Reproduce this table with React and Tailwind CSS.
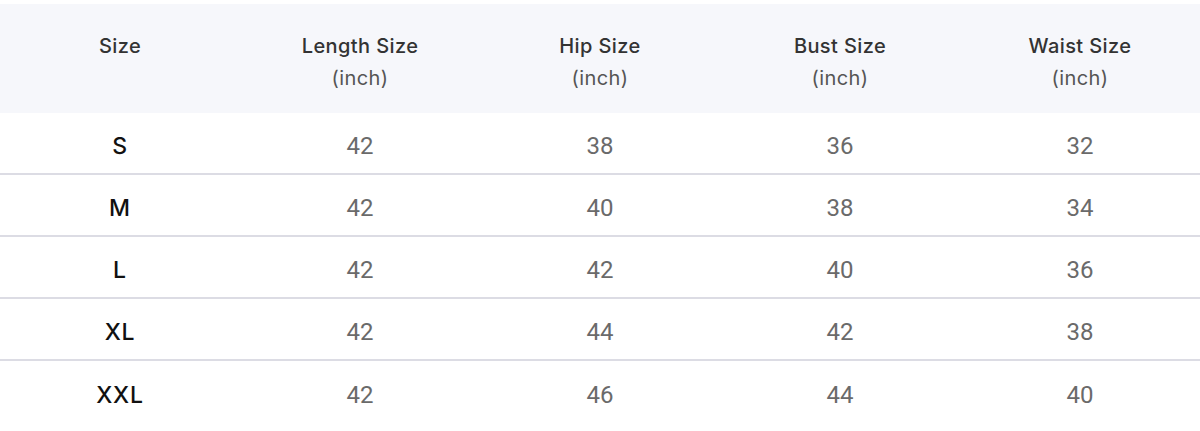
import React from 'react';

const columns = [
  { label: 'Size' },
  { label: 'Length Size', unit: '(inch)' },
  { label: 'Hip Size', unit: '(inch)' },
  { label: 'Bust Size', unit: '(inch)' },
  { label: 'Waist Size', unit: '(inch)' }
];

const rows = [
  ['S', 42, 38, 36, 32],
  ['M', 42, 40, 38, 34],
  ['L', 42, 42, 40, 36],
  ['XL', 42, 44, 42, 38],
  ['XXL', 42, 46, 44, 40]
];

export default function App() {
  return (
    <div className="w-[1200px] h-[431px] bg-white pt-[4px]">
      <div className="grid grid-cols-5 h-[109px] bg-[#f6f7fb] font-['Inter',sans-serif]">
        {columns.map((col) => (
          <div key={col.label} className="flex flex-col items-center pt-[27px]">
            <div className="text-[20px] leading-[30px] font-medium tracking-[0.4px] text-[#333333]">
              {col.label}
            </div>
            {col.unit && (
              <div className="text-[20px] leading-[30px] mt-[2px] tracking-[0.4px] text-[#555555]">
                {col.unit}
              </div>
            )}
          </div>
        ))}
      </div>
      {rows.map((row, i) => (
        <div
          key={row[0]}
          className={`grid grid-cols-5 h-[62px] items-center pt-[6px] ${
            i < rows.length - 1 ? 'border-b-2 border-[#dcdce4]' : ''
          }`}
        >
          {row.map((cell, j) => (
            <div
              key={j}
              className={
                j === 0
                  ? "text-center text-[23px] font-medium tracking-[0.8px] text-[#111111] font-['Inter',sans-serif]"
                  : "text-center text-[24px] text-[#6a6a6a] font-['Roboto',sans-serif]"
              }
            >
              {cell}
            </div>
          ))}
        </div>
      ))}
    </div>
  );
}
